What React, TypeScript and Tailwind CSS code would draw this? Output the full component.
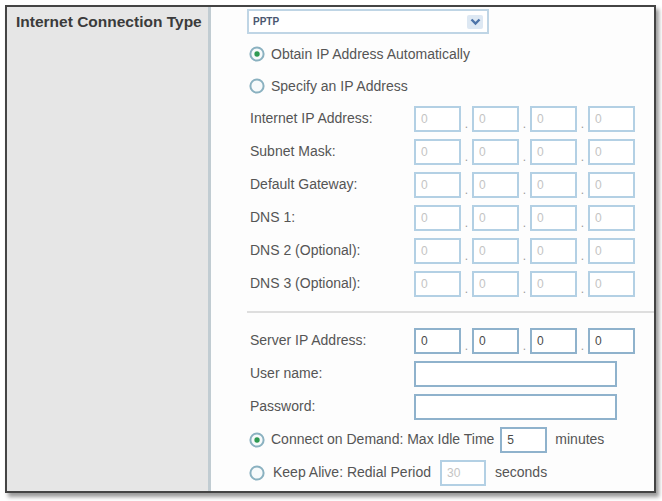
import { ReactNode } from 'react'

const font = { fontFamily: '"Liberation Sans", Arial, sans-serif' }

type Ip = { label: string; active?: boolean }

const ipRows: Ip[] = [
  { label: 'Internet IP Address:' },
  { label: 'Subnet Mask:' },
  { label: 'Default Gateway:' },
  { label: 'DNS 1:' },
  { label: 'DNS 2 (Optional):' },
  { label: 'DNS 3 (Optional):' },
]

function Radio({ checked }: { checked?: boolean }) {
  return (
    <svg width="16" height="16" viewBox="0 0 16 16" className="shrink-0">
      <circle cx="8" cy="8" r="6.6" fill="#f7fafb" stroke="#8ab1c0" strokeWidth="2" />
      {checked && <circle cx="8" cy="8" r="2.7" fill="#2f9a52" />}
    </svg>
  )
}

function Box({ value, active, className = 'w-[47px]' }: { value: string; active?: boolean; className?: string }) {
  return (
    <div
      className={`h-[26px] border-2 bg-white flex items-center pl-[5px] text-[12px] ${className} ${
        active ? 'border-[#8fb2cc] text-[#4a4a4a]' : 'border-[#b3d0e4] text-[#c4c4c4]'
      }`}
    >
      {value}
    </div>
  )
}

function IpFields({ active }: { active?: boolean }) {
  return (
    <div className="flex items-center">
      {[0, 1, 2, 3].map((i) => (
        <div key={i} className="flex items-end">
          {i > 0 && <span className="w-[11px] text-center text-[12px] leading-none text-[#9a9a9a] mb-[2px]">.</span>}
          <Box value="0" active={active} />
        </div>
      ))}
    </div>
  )
}

function Row({ label, children }: { label: string; children: ReactNode }) {
  return (
    <div className="h-[33px] flex items-center">
      <span className="w-[165px] shrink-0 pl-[1px] text-[14px] text-[#555555]">{label}</span>
      {children}
    </div>
  )
}

export default function App() {
  return (
    <div className="w-[662px] h-[501px] bg-white pt-[5px] pl-[5px]" style={font}>
      <div className="w-[651px] h-[488px] border-2 border-[#444444] flex shadow-[3px_4px_4px_rgba(0,0,0,0.4)] overflow-hidden">
        {/* Left label column */}
        <div className="w-[204px] shrink-0 bg-[#e6e6e6] border-r-[3px] border-[#c1ccd2] pl-[9px] pt-[5px]">
          <p className="text-[15.5px] font-bold leading-[20px] text-[#3b3b3b]">Internet Connection Type</p>
        </div>

        {/* Settings */}
        <div className="flex-1 bg-[#fdfdfd] pl-[38px] pt-[2px] flex flex-col">
          <div className="ml-[-2px] w-[242px] h-[25px] border-2 border-[#bfd5e5] bg-white flex items-center justify-between pl-[4px] pr-[4px]">
            <span className="text-[10px] font-bold text-[#4a5670]">PPTP</span>
            <div className="w-[16px] h-[14px] bg-[#dde8f3] rounded-[2px] flex items-center justify-center">
              <svg width="11" height="8" viewBox="0 0 11 8">
                <path d="M1.5 1.5 L5.5 5.5 L9.5 1.5" fill="none" stroke="#4d74a8" strokeWidth="2.4" />
              </svg>
            </div>
          </div>

          <div className="mt-[4px] h-[32px] flex items-center gap-[6px]">
            <Radio checked />
            <span className="text-[14px] text-[#555555]">Obtain IP Address Automatically</span>
          </div>
          <div className="h-[32px] flex items-center gap-[6px]">
            <Radio />
            <span className="text-[14px] text-[#555555]">Specify an IP Address</span>
          </div>

          {ipRows.map((r) => (
            <Row key={r.label} label={r.label}>
              <IpFields />
            </Row>
          ))}

          <div className="ml-[-2px] mt-[11px] mb-[11px] h-[2px] bg-[#dedede]" />

          <Row label="Server IP Address:">
            <IpFields active />
          </Row>
          <Row label="User name:">
            <Box value="" active className="w-[203px]" />
          </Row>
          <Row label="Password:">
            <Box value="" active className="w-[203px]" />
          </Row>

          <div className="h-[33px] flex items-center gap-[6px]">
            <Radio checked />
            <span className="text-[14px] text-[#555555]">Connect on Demand: Max Idle Time</span>
            <Box value="5" active className="w-[47px]" />
            <span className="ml-[2px] text-[14px] text-[#555555]">minutes</span>
          </div>
          <div className="h-[33px] flex items-center gap-[6px]">
            <Radio />
            <span className="ml-[2px] text-[14px] text-[#555555]">Keep Alive: Redial Period</span>
            <Box value="30" className="w-[46px] ml-[3px]" />
            <span className="ml-[3px] text-[14px] text-[#555555]">seconds</span>
          </div>
        </div>
      </div>
    </div>
  )
}
